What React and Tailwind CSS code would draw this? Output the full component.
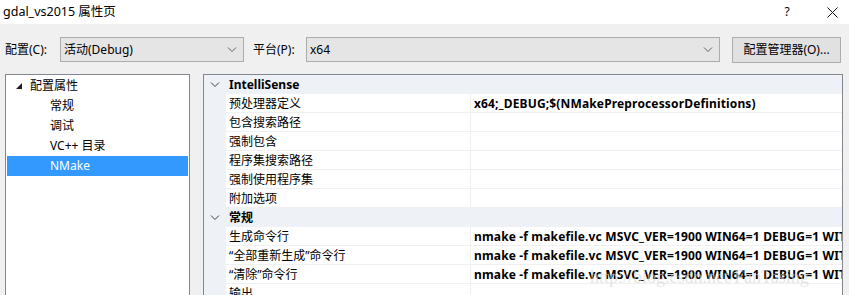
import React from 'react';

const Chevron = ({ className = '' }) => (
  <svg width="10" height="6" viewBox="0 0 10 6" className={className}>
    <polyline points="1,0.5 5,4.5 9,0.5" fill="none" stroke="currentColor" strokeWidth="1" />
  </svg>
);

const Combo = ({ value, width }) => (
  <div className={`h-[25px] ${width} bg-[#e5e5e5] border border-[#acacac] flex items-center justify-between pl-[3px] pr-[6px]`}>
    <span>{value}</span>
    <Chevron className="text-[#606060]" />
  </div>
);

const treeItems = ['常规', '调试', 'VC++ 目录', 'NMake'];

const cmd = 'nmake -f makefile.vc MSVC_VER=1900 WIN64=1 DEBUG=1 WITH_PDB=1';

const sections = [
  {
    title: 'IntelliSense',
    rows: [
      ['预处理器定义', 'x64;_DEBUG;$(NMakePreprocessorDefinitions)'],
      ['包含搜索路径', ''],
      ['强制包含', ''],
      ['程序集搜索路径', ''],
      ['强制使用程序集', ''],
      ['附加选项', ''],
    ],
  },
  {
    title: '常规',
    rows: [
      ['生成命令行', cmd],
      ['“全部重新生成”命令行', cmd],
      ['“清除”命令行', cmd],
      ['输出', ''],
    ],
  },
];

export default function App() {
  return (
    <div
      className="w-[849px] h-[295px] overflow-hidden bg-[#f0f0f0] text-[12px] text-black relative"
      style={{ fontFamily: '"Noto Sans", "Noto Sans CJK SC", sans-serif' }}
    >
      {/* title bar */}
      <div className="h-[24px] bg-white flex items-center justify-between pl-[3px]">
        <span className="text-[12.5px] leading-none">gdal_vs2015 属性页</span>
        <div className="flex items-center h-full pr-[11px]">
          <span className="w-[12px] text-center text-[12px]">?</span>
          <svg width="11" height="11" viewBox="0 0 11 11" className="ml-[34px]">
            <path d="M0.5 0.5 L10.5 10.5 M10.5 0.5 L0.5 10.5" stroke="#111" strokeWidth="1" />
          </svg>
        </div>
      </div>

      {/* config row */}
      <div className="flex items-center h-[25px] mt-[13px]">
        <span className="pl-[5px] w-[60px]">配置(C):</span>
        <Combo value="活动(Debug)" width="w-[184px]" />
        <span className="ml-[9px] w-[53px]">平台(P):</span>
        <Combo value="x64" width="w-[414px]" />
        <div className="ml-[12px] h-[26px] w-[109px] bg-[#e1e1e1] border border-[#adadad] flex items-center justify-center">
          配置管理器(O)...
        </div>
      </div>

      {/* panels */}
      <div className="flex mt-[12px] h-[260px]">
        <div className="ml-[5px] w-[185px] bg-white border border-[#828790] pt-[1px]">
          <div className="h-[20px] flex items-center">
            <svg width="6" height="6" viewBox="0 0 6 6" className="ml-[10px] mr-[8px]">
              <polygon points="6,0 6,6 0,6" fill="#1e1e1e" />
            </svg>
            <span>配置属性</span>
          </div>
          {treeItems.map((t, i) => (
            <div
              key={t}
              className={`h-[20px] flex items-center pl-[43px] mx-[1px] ${i === 3 ? 'bg-[#3399ff] text-white' : ''}`}
            >
              {t}
            </div>
          ))}
        </div>

        <div className="ml-[13px] w-[640px] bg-white border border-[#828790] overflow-hidden">
          {sections.map((s) => (
            <div key={s.title}>
              <div className="h-[19px] bg-[#eef1f6] flex items-center pt-[1px]">
                <div className="w-[22px] flex justify-center">
                  <Chevron className="text-[#3c3c3c]" />
                </div>
                <span className="pl-[3px] font-bold">{s.title}</span>
              </div>
              {s.rows.map(([name, val]) => (
                <div key={name} className="h-[19px] flex">
                  <div className="w-[22px] shrink-0 bg-[#eef1f6]" />
                  <div className="flex flex-1 border-b border-[#f0f0f0] min-w-0">
                    <div className="w-[245px] shrink-0 pl-[3px] pt-[1px] flex items-center border-r border-[#f0f0f0]">
                      {name}
                    </div>
                    <div className="flex-1 pl-[3px] pt-[1px] flex items-center font-bold tracking-[0.15px] whitespace-nowrap overflow-hidden">
                      {val}
                    </div>
                  </div>
                </div>
              ))}
            </div>
          ))}
        </div>
      </div>

      {/* watermark */}
      <div
        className="absolute left-[590px] top-[264px] text-[18px] text-[#d4d4d4]/60 whitespace-nowrap pointer-events-none"
        style={{ fontFamily: '"Liberation Serif", serif' }}
      >
        http://blog.csdn.net/FanTasing
      </div>
    </div>
  );
}
